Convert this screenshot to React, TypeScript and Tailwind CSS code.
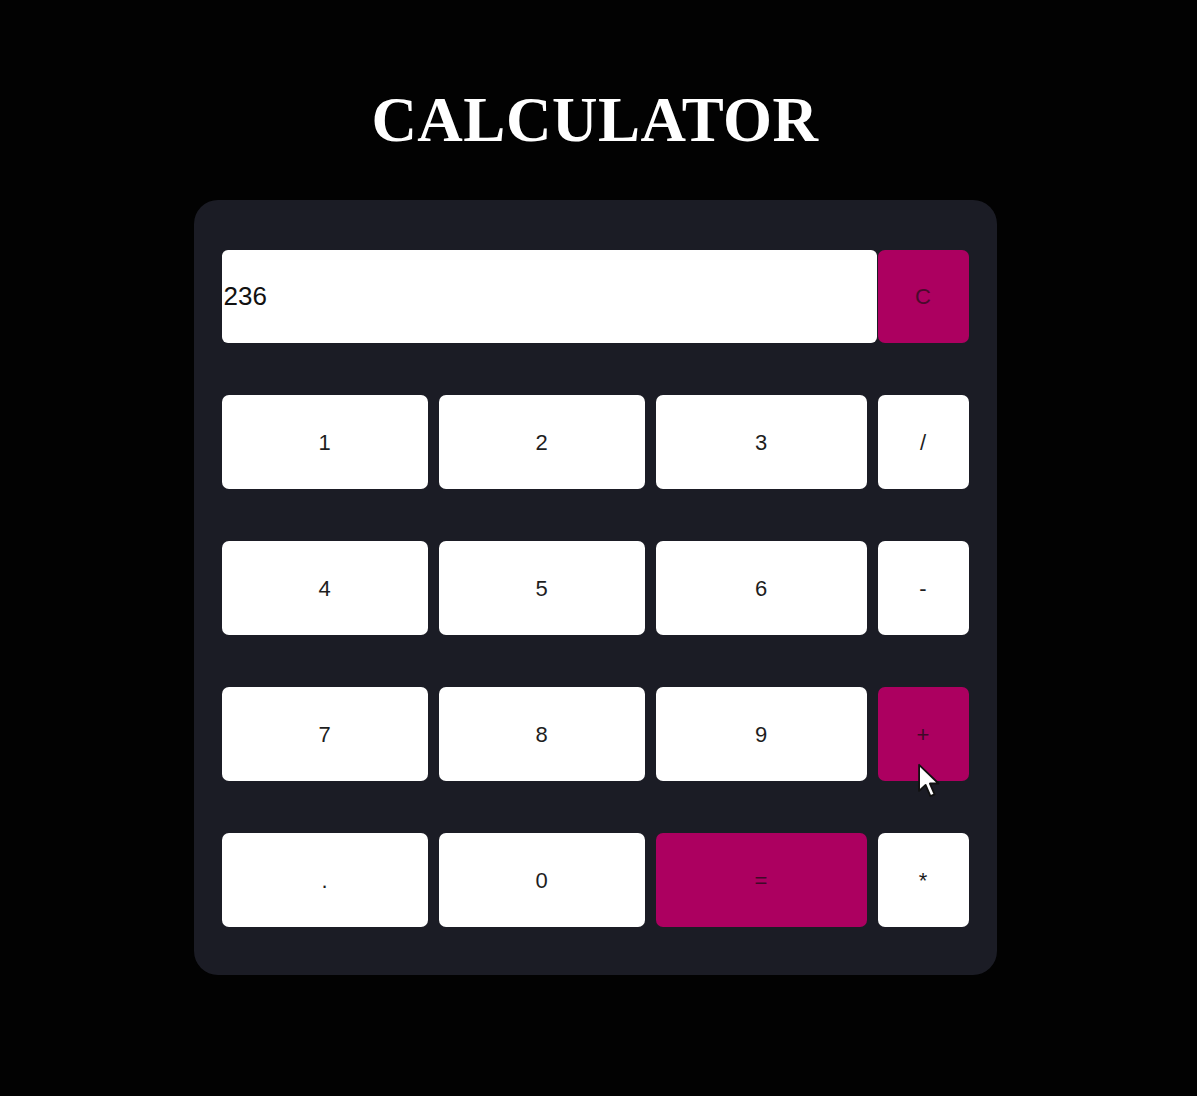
import type React from "react"

const rows: string[][] = [
  ["1", "2", "3", "/"],
  ["4", "5", "6", "-"],
  ["7", "8", "9", "+"],
  [".", "0", "=", "*"],
]

const accent = new Set(["+", "="])

const Cursor: React.FC = () => (
  <svg
    className="pointer-events-none absolute left-[38px] top-[76px] h-[36px] w-[26px]"
    viewBox="0 0 13 20"
  >
    <path
      d="M1 1 L1 15.5 L4.6 12.2 L7.3 18.4 L9.6 17.4 L7 11.4 L11.8 11.4 Z"
      fill="#ffffff"
      stroke="#111111"
      strokeWidth="1"
      strokeLinejoin="round"
    />
  </svg>
)

const App: React.FC = () => {
  return (
    <div className="flex min-h-[1096px] w-full flex-col items-center bg-[#020202] pr-[7px] pt-[84px] font-['Liberation_Sans',Arial,sans-serif]">
      <h1 className="font-['Liberation_Serif','Times_New_Roman',serif] text-[63px] font-bold leading-[72px] tracking-[0.5px] text-white">
        CALCULATOR
      </h1>

      <div className="mt-[44px] rounded-[24px] bg-[#1b1c25] px-[28px] pb-[48px] pt-[50px]">
        <div className="flex">
          <div className="flex h-[93px] w-[655px] items-center rounded-[6px] bg-white pl-[2px] text-[26px] text-[#111]">
            236
          </div>
          <button className="ml-[1px] flex h-[93px] w-[91px] items-center justify-center rounded-[7px] bg-[#ac0060] text-[22px] text-[#4a0a2c]">
            C
          </button>
        </div>

        <div className="mt-[52px] grid grid-cols-[206px_206px_211px_91px] gap-x-[11px] gap-y-[52px]">
          {rows.flat().map((key) => (
            <button
              key={key}
              className={
                accent.has(key)
                  ? "relative flex h-[94px] items-center justify-center rounded-[7px] bg-[#ac0060] text-[22px] text-[#3f0a28]"
                  : "flex h-[94px] items-center justify-center rounded-[7px] bg-white text-[22px] text-[#1e1e1e]"
              }
            >
              {key}
              {key === "+" && <Cursor />}
            </button>
          ))}
        </div>
      </div>
    </div>
  )
}

export default App
